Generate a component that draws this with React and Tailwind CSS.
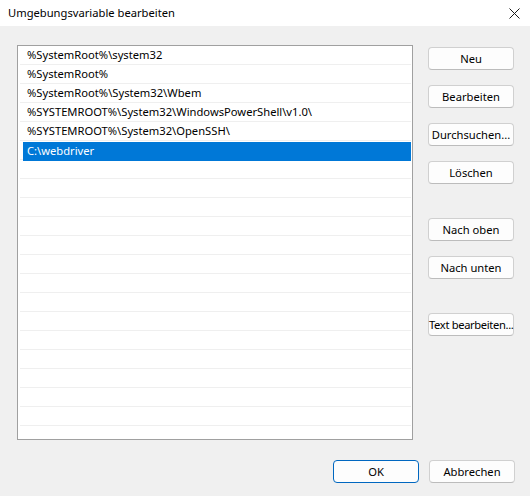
import React from 'react';

const entries = [
  '%SystemRoot%\\system32',
  '%SystemRoot%',
  '%SystemRoot%\\System32\\Wbem',
  '%SYSTEMROOT%\\System32\\WindowsPowerShell\\v1.0\\',
  '%SYSTEMROOT%\\System32\\OpenSSH\\',
  'C:\\webdriver',
];

const SELECTED = 5;
const ROW_COUNT = 21;

const Button = ({ children, primary, className = '' }) => (
  <button
    className={`h-[23px] w-[86px] whitespace-nowrap rounded-[4px] border bg-[#fdfdfd] px-0 text-[11.2px] leading-none text-black ${
      primary ? 'border-[#0067c0]' : 'border-[#d0d0d0] border-b-[#bcbcbc]'
    } ${className}`}
  >
    {children}
  </button>
);

const App = () => {
  const rows = Array.from({ length: ROW_COUNT }, (_, i) => entries[i] ?? '');

  return (
    <div className="flex h-[496px] w-[530px] flex-col overflow-hidden bg-[#f0f0f0] font-['Noto_Sans',sans-serif] text-black">
      {/* title bar */}
      <div className="flex h-[26px] shrink-0 items-center justify-between bg-white pl-[8px] pr-[10px]">
        <span className="text-[11.2px]">Umgebungsvariable bearbeiten</span>
        <svg width="11" height="11" viewBox="0 0 11 11" className="mt-[1px]">
          <path d="M0.5 0.5 L10.5 10.5 M10.5 0.5 L0.5 10.5" stroke="#1a1a1a" strokeWidth="1" />
        </svg>
      </div>

      {/* body */}
      <div className="flex pl-[17px] pt-[19px]">
        <div className="h-[395px] w-[396px] overflow-hidden border border-[#a0a0a0] bg-white">
          <div className="flex flex-col pl-[2px] pr-[1px]">
            {rows.map((text, i) => (
              <div key={i} className="h-[19px] shrink-0 border-b border-[#efefef]">
                {i === SELECTED ? (
                  <div className="ml-[3px] mt-[1px] flex h-[19px] items-center whitespace-nowrap bg-[#0078d7] pl-[4px] text-[11.2px] text-white">
                    {text}
                  </div>
                ) : (
                  <div className="flex h-[18px] items-center whitespace-nowrap pl-[7px] text-[11.2px]">{text}</div>
                )}
              </div>
            ))}
          </div>
        </div>

        <div className="ml-[15px] flex flex-col pt-[2px]">
          <Button>Neu</Button>
          <Button className="mt-[15px]">Bearbeiten</Button>
          <Button className="mt-[15px]">Durchsuchen...</Button>
          <Button className="mt-[15px]">Löschen</Button>
          <Button className="mt-[34px]">Nach oben</Button>
          <Button className="mt-[15px]">Nach unten</Button>
          <Button className="mt-[34px] tracking-[-0.35px]">Text bearbeiten...</Button>
        </div>
      </div>

      {/* footer */}
      <div className="mt-[20px] flex justify-end gap-[10px] pr-[15px]">
        <Button primary>OK</Button>
        <Button>Abbrechen</Button>
      </div>
    </div>
  );
};

export default App;
